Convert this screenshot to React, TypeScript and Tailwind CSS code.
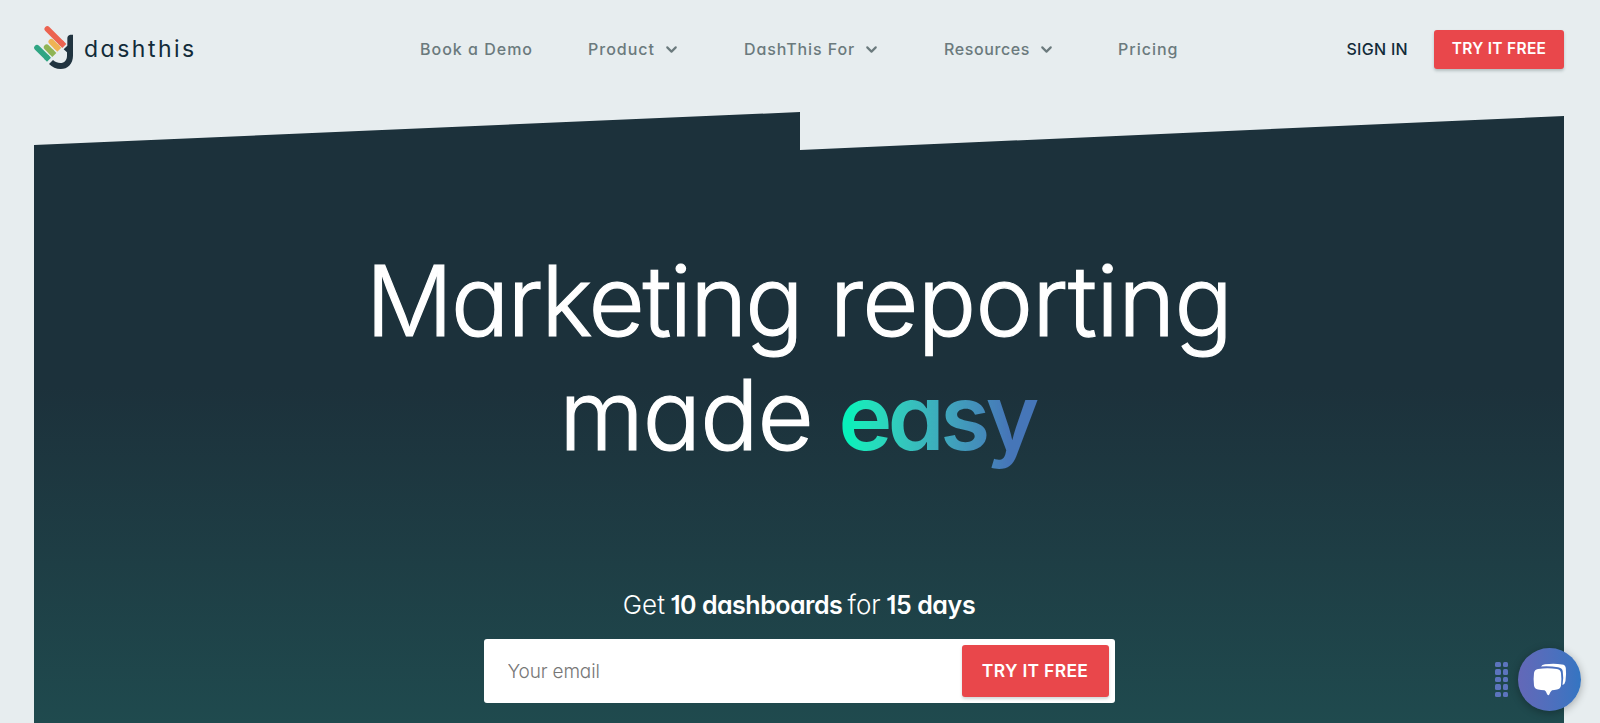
import React from "react";
import { ChevronDown } from "lucide-react";
import { clsx } from "clsx";

const navItems = [
  { label: "Book a Demo", width: "w-[168px]", spacing: "tracking-[1px]" },
  { label: "Product", width: "w-[156px]", spacing: "tracking-[1px]", menu: true },
  { label: "DashThis For", width: "w-[200px]", spacing: "tracking-[0.9px]", menu: true },
  { label: "Resources", width: "w-[174px]", spacing: "tracking-[0.6px]", menu: true },
  { label: "Pricing", width: "w-[60px]", spacing: "tracking-[1px]" },
];

export default function App() {
  return (
    <div className="relative flex h-[723px] w-full flex-col overflow-hidden bg-[#e7edef] font-['Inter','Lato',sans-serif] [font-feature-settings:'cv11','cv01']">
      <Header />
      <Hero />
      <ChatWidget />
    </div>
  );
}

const Header = () => {
  return (
    <header className="flex h-[112px] shrink-0 items-start pr-9 pl-[34px]">
      <Logo />
      <nav className="flex h-[98px] items-center pl-[226px]">
        {navItems.map((item) => (
          <a
            key={item.label}
            className={clsx(
              "flex shrink-0 items-center text-[16px] font-medium whitespace-nowrap text-[#6b7a7d]",
              item.width,
              item.spacing
            )}
          >
            {item.label}
            {item.menu && <ChevronDown className="ml-2 size-[17px]" strokeWidth={3} />}
          </a>
        ))}
      </nav>
      <div className="ml-auto flex h-[98px] items-center gap-[26px]">
        <a className="text-[16px] font-medium tracking-[0.3px] whitespace-nowrap text-[#122b39]">SIGN IN</a>
        <button className="h-[39px] w-[130px] rounded-[3px] bg-[#e9474b] text-[15.5px] font-semibold tracking-[0.3px] whitespace-nowrap text-white shadow-[0_2px_3px_rgba(30,60,60,0.25)]">
          TRY IT FREE
        </button>
      </div>
    </header>
  );
};

const Logo = () => {
  return (
    <div className="flex h-[98px] w-[160px] items-center">
      <svg viewBox="40 42 120 135" className="mt-[-4px] h-[45px] w-10 shrink-0" fill="none" strokeWidth="17">
        <path d="M80 54 122 96" stroke="#ec6350" strokeLinecap="round" />
        <path d="M120 94l11 11" stroke="#ec6350" />
        <path d="M92 92l15 15" stroke="#efb354" strokeLinecap="round" />
        <path d="M105 105l11 11" stroke="#efb354" />
        <path d="M78 109l14 14" stroke="#8fb454" strokeLinecap="round" />
        <path d="M90 121l11 11" stroke="#8fb454" />
        <path d="M49 110l29 29" stroke="#2fa583" strokeLinecap="round" />
        <path d="M76 137l9 9" stroke="#2fa583" />
        <path
          d="M140 104V82q0-9 9-11h8V134C157 158 141 174 120 174C107 174 94 168 85 159L97 147C105 154 111 156 119 156C131 156 139 147 139 134V124L129 115Z"
          fill="#213440"
        />
      </svg>
      <span className="ml-[10px] text-[23px] leading-none tracking-[2.5px] text-[#122b39]">dashthis</span>
    </div>
  );
};

const Hero = () => {
  return (
    <main className="ml-[34px] flex h-[611px] w-[1530px] shrink-0 flex-col items-center bg-linear-to-b from-[#1c313b] from-45% to-[#1f4a4e] [clip-path:polygon(0_33px,766px_0,766px_38px,100%_4px,100%_100%,0_100%)]">
      <h1 className="mt-[132px] flex flex-col items-center text-[97px] leading-[114px] font-light whitespace-nowrap text-white">
        <span className="flex gap-[28px] [-webkit-text-stroke:1.2px_white]">
          <span className="tracking-[-2px]">Marketing</span>
          <span className="tracking-[-0.7px]">reporting</span>
        </span>
        <span className="flex items-baseline gap-[26px]">
          <span className="tracking-[-1.1px] [-webkit-text-stroke:1.2px_white]">made</span>
          <span className="bg-linear-to-r from-[#08f0ba] from-5% to-[#4676b8] to-85% bg-clip-text pr-1 text-[91px] font-semibold tracking-[-4.5px] text-transparent">
            easy
          </span>
        </span>
      </h1>
      <p className="mt-[115px] text-[26px] leading-8 font-light [word-spacing:-2px] whitespace-nowrap text-white">
        Get <b className="text-[25px] font-semibold tracking-[-0.5px] [word-spacing:0px]">10 dashboards</b> for{" "}
        <b className="text-[25px] font-semibold tracking-[-0.4px] [word-spacing:0px]">15 days</b>
      </p>
      <form className="mt-[18px] flex h-[64px] w-[631px] items-center rounded-[3px] bg-white py-1.5 pr-1.5 pl-6">
        <input
          type="email"
          placeholder="Your email"
          className="h-full min-w-0 flex-1 text-[19px] font-light tracking-[-0.15px] outline-none placeholder:text-[#777777]"
        />
        <button
          type="button"
          className="h-[52px] w-[147px] rounded-[3px] bg-[#e9474b] text-[17.5px] font-semibold tracking-[0.3px] whitespace-nowrap text-white shadow-[0_2px_3px_rgba(30,60,60,0.2)]"
        >
          TRY IT FREE
        </button>
      </form>
    </main>
  );
};

const ChatWidget = () => {
  return (
    <div className="absolute right-[19px] bottom-[12px] flex items-center gap-[10px]">
      <div className="grid grid-cols-2 gap-x-[2px] gap-y-[2px]">
        {[...Array(10)].map((_, i) => (
          <div key={i} className="size-[5.5px] rounded-[1.5px] bg-[#5c74bd]" />
        ))}
      </div>
      <div className="flex size-[63px] items-center justify-center rounded-full bg-linear-to-r from-[#6368b8] to-[#3375c2] shadow-[0_2px_8px_rgba(0,0,0,0.3)]">
        <svg viewBox="0 0 34 34" className="size-[34px]">
          <path d="M8 3.500Q9 1.500 12 1.300Q21 .4 29 1.400Q32.500 1.800 32.800 5Q33.500 11 32.500 18Q32 21 29.500 22Q30.800 14 29.700 8Q29 4.800 25 4.200Q17 3 8 3.500Z" fill="white" />
          <path d="M5 6Q14.500 4.600 24 6Q27.500 6.500 28 10Q28.800 16 28 22.500Q27.500 26 24 26.500Q21 27 19 27.200Q17.500 28.500 16 32Q14.500 32.500 14 31Q13 28 11.500 27.200Q8 27 5 26.500Q1.500 26 1 22.500Q.2 16 1 10Q1.500 6.500 5 6Z" fill="white" />
        </svg>
      </div>
    </div>
  );
};
